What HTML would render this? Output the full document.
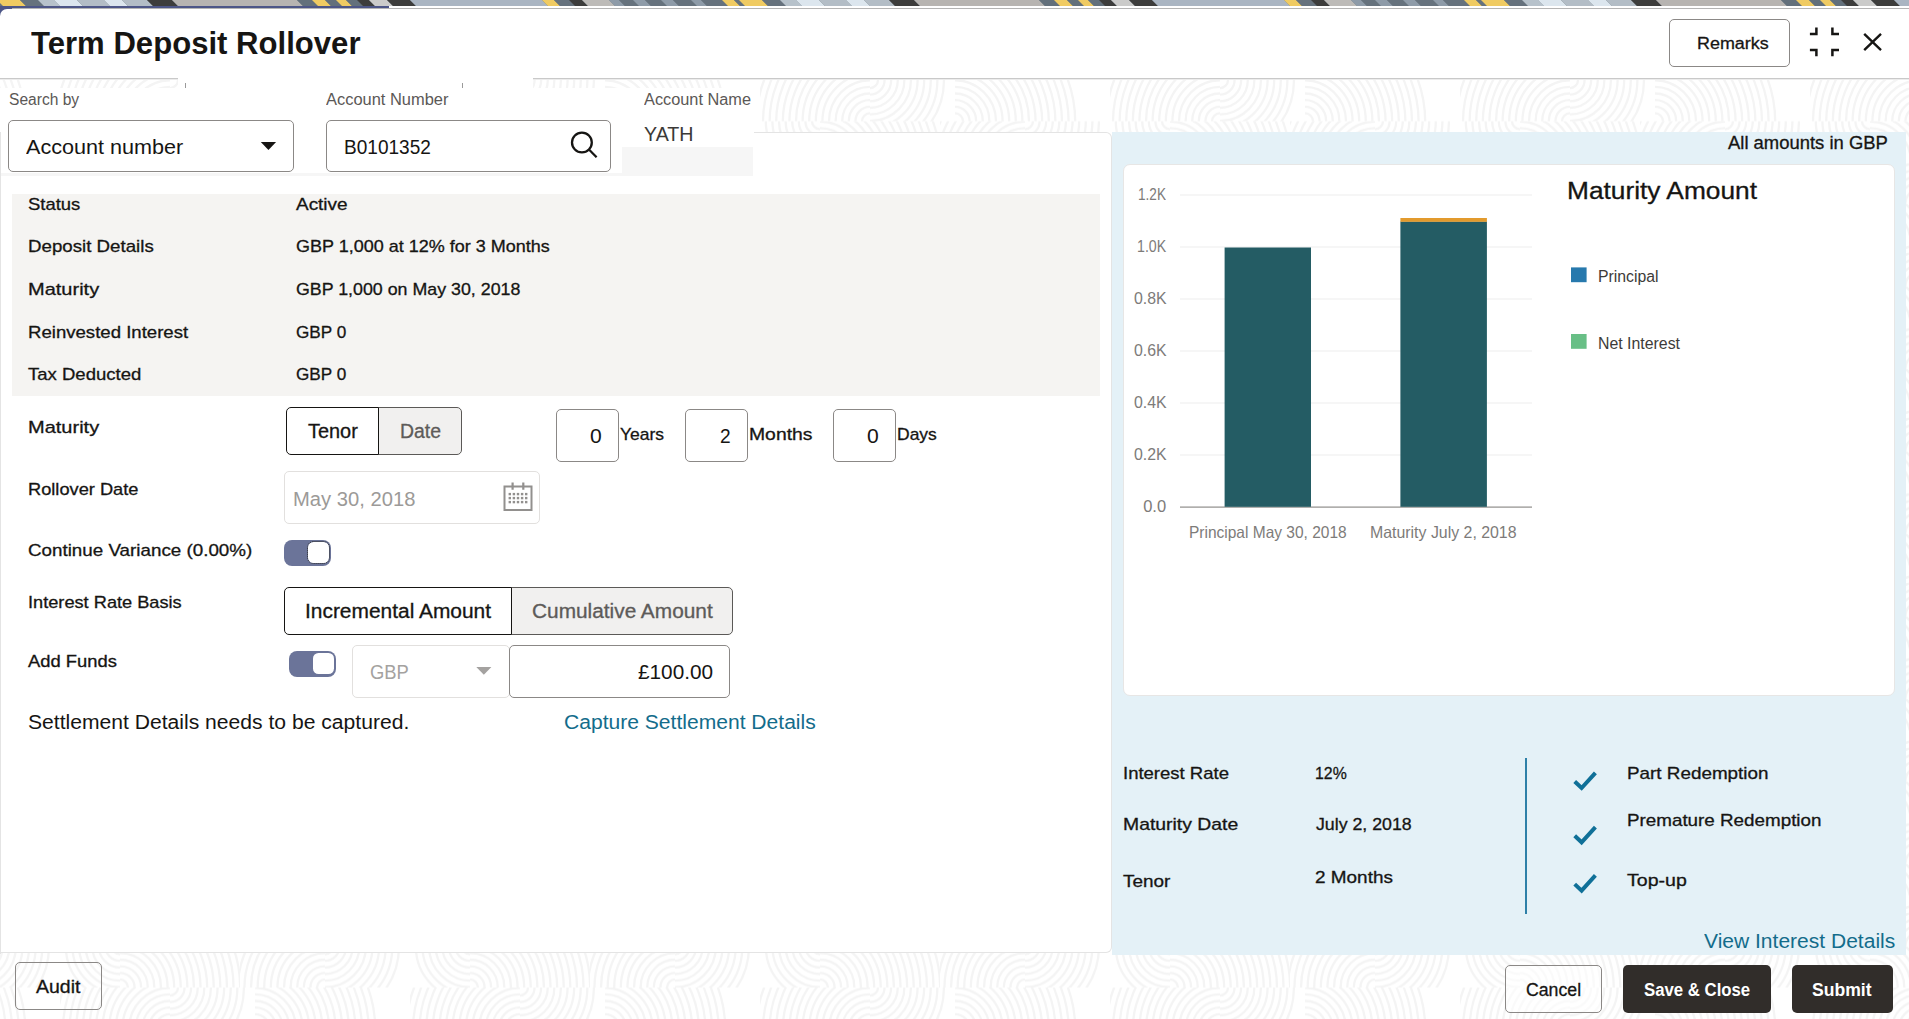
<!DOCTYPE html><html lang="en"><head><meta charset="utf-8"><title>Term Deposit Rollover</title><style>
html,body{margin:0;padding:0;}
body{width:1909px;height:1019px;overflow:hidden;background:#fff;position:relative;font-family:"Liberation Sans",sans-serif;}
.b{position:absolute;box-sizing:border-box;}
.t{position:absolute;white-space:nowrap;margin:0;transform-origin:0 50%;}
.strip{position:absolute;left:0;top:0;display:block;background:#66727d;}
.ov{position:absolute;left:0;top:0;pointer-events:none;}
.bgp{position:absolute;left:0;top:0;}
</style></head><body>
<svg class="bgp" width="1909" height="1019"><defs><pattern id="p" x="760" y="80" width="350" height="82.5" patternUnits="userSpaceOnUse"><defs><clipPath id="c0"><rect x="0" y="0.0" width="110" height="41.25"/></clipPath><clipPath id="c1"><rect x="110" y="0.0" width="85" height="41.25"/></clipPath><clipPath id="c2"><rect x="195" y="0.0" width="155" height="41.25"/></clipPath><clipPath id="c3"><rect x="0" y="41.25" width="60" height="41.25"/></clipPath><clipPath id="c4"><rect x="60" y="41.25" width="120" height="41.25"/></clipPath><clipPath id="c5"><rect x="180" y="41.25" width="85" height="41.25"/></clipPath><clipPath id="c6"><rect x="265" y="41.25" width="85" height="41.25"/></clipPath></defs><g clip-path="url(#c0)" fill="none" stroke="#f4f4f4" stroke-width="2.3"><circle cx="110" cy="41.25" r="8.0"/><circle cx="110" cy="41.25" r="14.6"/><circle cx="110" cy="41.25" r="21.2"/><circle cx="110" cy="41.25" r="27.8"/><circle cx="110" cy="41.25" r="34.4"/><circle cx="110" cy="41.25" r="41.0"/><circle cx="110" cy="41.25" r="47.6"/><circle cx="110" cy="41.25" r="54.2"/><circle cx="110" cy="41.25" r="60.8"/><circle cx="110" cy="41.25" r="67.4"/><circle cx="110" cy="41.25" r="74.0"/><circle cx="110" cy="41.25" r="80.6"/><circle cx="110" cy="41.25" r="87.2"/><circle cx="110" cy="41.25" r="93.8"/><circle cx="110" cy="41.25" r="100.4"/><circle cx="110" cy="41.25" r="107.0"/><circle cx="110" cy="41.25" r="113.6"/><circle cx="110" cy="41.25" r="120.2"/></g><g clip-path="url(#c1)" fill="none" stroke="#f4f4f4" stroke-width="2.3"><circle cx="110" cy="0.0" r="8.0"/><circle cx="110" cy="0.0" r="14.6"/><circle cx="110" cy="0.0" r="21.2"/><circle cx="110" cy="0.0" r="27.8"/><circle cx="110" cy="0.0" r="34.4"/><circle cx="110" cy="0.0" r="41.0"/><circle cx="110" cy="0.0" r="47.6"/><circle cx="110" cy="0.0" r="54.2"/><circle cx="110" cy="0.0" r="60.8"/><circle cx="110" cy="0.0" r="67.4"/><circle cx="110" cy="0.0" r="74.0"/></g><g clip-path="url(#c2)" fill="none" stroke="#f4f4f4" stroke-width="2.3"><circle cx="195" cy="41.25" r="8.0"/><circle cx="195" cy="41.25" r="14.6"/><circle cx="195" cy="41.25" r="21.2"/><circle cx="195" cy="41.25" r="27.8"/><circle cx="195" cy="41.25" r="34.4"/><circle cx="195" cy="41.25" r="41.0"/><circle cx="195" cy="41.25" r="47.6"/><circle cx="195" cy="41.25" r="54.2"/><circle cx="195" cy="41.25" r="60.8"/><circle cx="195" cy="41.25" r="67.4"/><circle cx="195" cy="41.25" r="74.0"/><circle cx="195" cy="41.25" r="80.6"/><circle cx="195" cy="41.25" r="87.2"/><circle cx="195" cy="41.25" r="93.8"/><circle cx="195" cy="41.25" r="100.4"/><circle cx="195" cy="41.25" r="107.0"/><circle cx="195" cy="41.25" r="113.6"/><circle cx="195" cy="41.25" r="120.2"/></g><g clip-path="url(#c3)" fill="none" stroke="#f4f4f4" stroke-width="2.3"><circle cx="60" cy="41.25" r="8.0"/><circle cx="60" cy="41.25" r="14.6"/><circle cx="60" cy="41.25" r="21.2"/><circle cx="60" cy="41.25" r="27.8"/><circle cx="60" cy="41.25" r="34.4"/><circle cx="60" cy="41.25" r="41.0"/><circle cx="60" cy="41.25" r="47.6"/><circle cx="60" cy="41.25" r="54.2"/></g><g clip-path="url(#c4)" fill="none" stroke="#f4f4f4" stroke-width="2.3"><circle cx="60" cy="82.5" r="8.0"/><circle cx="60" cy="82.5" r="14.6"/><circle cx="60" cy="82.5" r="21.2"/><circle cx="60" cy="82.5" r="27.8"/><circle cx="60" cy="82.5" r="34.4"/><circle cx="60" cy="82.5" r="41.0"/><circle cx="60" cy="82.5" r="47.6"/><circle cx="60" cy="82.5" r="54.2"/><circle cx="60" cy="82.5" r="60.8"/><circle cx="60" cy="82.5" r="67.4"/><circle cx="60" cy="82.5" r="74.0"/><circle cx="60" cy="82.5" r="80.6"/><circle cx="60" cy="82.5" r="87.2"/><circle cx="60" cy="82.5" r="93.8"/><circle cx="60" cy="82.5" r="100.4"/><circle cx="60" cy="82.5" r="107.0"/><circle cx="60" cy="82.5" r="113.6"/><circle cx="60" cy="82.5" r="120.2"/></g><g clip-path="url(#c5)" fill="none" stroke="#f4f4f4" stroke-width="2.3"><circle cx="265" cy="82.5" r="8.0"/><circle cx="265" cy="82.5" r="14.6"/><circle cx="265" cy="82.5" r="21.2"/><circle cx="265" cy="82.5" r="27.8"/><circle cx="265" cy="82.5" r="34.4"/><circle cx="265" cy="82.5" r="41.0"/><circle cx="265" cy="82.5" r="47.6"/><circle cx="265" cy="82.5" r="54.2"/><circle cx="265" cy="82.5" r="60.8"/><circle cx="265" cy="82.5" r="67.4"/><circle cx="265" cy="82.5" r="74.0"/><circle cx="265" cy="82.5" r="80.6"/><circle cx="265" cy="82.5" r="87.2"/><circle cx="265" cy="82.5" r="93.8"/><circle cx="265" cy="82.5" r="100.4"/><circle cx="265" cy="82.5" r="107.0"/><circle cx="265" cy="82.5" r="113.6"/><circle cx="265" cy="82.5" r="120.2"/></g><g clip-path="url(#c6)" fill="none" stroke="#f4f4f4" stroke-width="2.3"><circle cx="265" cy="41.25" r="8.0"/><circle cx="265" cy="41.25" r="14.6"/><circle cx="265" cy="41.25" r="21.2"/><circle cx="265" cy="41.25" r="27.8"/><circle cx="265" cy="41.25" r="34.4"/><circle cx="265" cy="41.25" r="41.0"/><circle cx="265" cy="41.25" r="47.6"/><circle cx="265" cy="41.25" r="54.2"/><circle cx="265" cy="41.25" r="60.8"/><circle cx="265" cy="41.25" r="67.4"/><circle cx="265" cy="41.25" r="74.0"/></g></pattern></defs><rect width="1909" height="1019" fill="url(#p)"/></svg>
<svg class="strip" width="1909" height="6" viewBox="0 0 1909 6" preserveAspectRatio="none"><polygon points="-3,0 20,0 26,6 3,6" fill="#f0cb62"/><polygon points="20,0 38,0 44,6 26,6" fill="#66727d"/><polygon points="38,0 54,0 60,6 44,6" fill="#b7c2cb"/><polygon points="54,0 77,0 83,6 60,6" fill="#dce6ee"/><polygon points="77,0 104,0 110,6 83,6" fill="#b3bdc6"/><polygon points="104,0 122,0 128,6 110,6" fill="#dce6ee"/><polygon points="122,0 147,0 153,6 128,6" fill="#b3bdc6"/><polygon points="147,0 172,0 178,6 153,6" fill="#3d3d3c"/><polygon points="172,0 297,0 303,6 178,6" fill="#b7b4b1"/><polygon points="297,0 312,0 318,6 303,6" fill="#63707b"/><polygon points="312,0 325,0 331,6 318,6" fill="#f0cb62"/><polygon points="325,0 336,0 342,6 331,6" fill="#63707b"/><polygon points="336,0 346,0 352,6 342,6" fill="#f0cb62"/><polygon points="346,0 357,0 363,6 352,6" fill="#63707b"/><polygon points="357,0 369,0 375,6 363,6" fill="#3d3d3c"/><polygon points="369,0 387,0 393,6 375,6" fill="#cbcbca"/><polygon points="387,0 410,0 416,6 393,6" fill="#3d3d3c"/><polygon points="410,0 542,0 548,6 416,6" fill="#aab5c2"/><polygon points="542,0 554,0 560,6 548,6" fill="#f0cb62"/><polygon points="554,0 569,0 575,6 560,6" fill="#66727d"/><polygon points="569,0 582,0 588,6 575,6" fill="#3d3d3c"/><polygon points="582,0 609,0 615,6 588,6" fill="#bdbbb8"/><polygon points="609,0 619,0 625,6 615,6" fill="#8e9ba8"/><polygon points="619,0 633,0 639,6 625,6" fill="#66727d"/><polygon points="633,0 645,0 651,6 639,6" fill="#8e9ba8"/><polygon points="645,0 661,0 667,6 651,6" fill="#66727d"/><polygon points="661,0 673,0 679,6 667,6" fill="#8e9ba8"/><polygon points="673,0 691,0 697,6 679,6" fill="#66727d"/><polygon points="691,0 701,0 707,6 697,6" fill="#8e9ba8"/><polygon points="701,0 722,0 728,6 707,6" fill="#66727d"/><polygon points="722,0 734,0 740,6 728,6" fill="#f0cb62"/><polygon points="734,0 739,0 745,6 740,6" fill="#66727d"/><polygon points="739,0 762,0 768,6 745,6" fill="#f0cb62"/><polygon points="762,0 780,0 786,6 768,6" fill="#66727d"/><polygon points="780,0 796,0 802,6 786,6" fill="#b7c2cb"/><polygon points="796,0 819,0 825,6 802,6" fill="#dce6ee"/><polygon points="819,0 846,0 852,6 825,6" fill="#b3bdc6"/><polygon points="846,0 864,0 870,6 852,6" fill="#dce6ee"/><polygon points="864,0 889,0 895,6 870,6" fill="#b3bdc6"/><polygon points="889,0 914,0 920,6 895,6" fill="#3d3d3c"/><polygon points="914,0 1039,0 1045,6 920,6" fill="#b7b4b1"/><polygon points="1039,0 1054,0 1060,6 1045,6" fill="#63707b"/><polygon points="1054,0 1067,0 1073,6 1060,6" fill="#f0cb62"/><polygon points="1067,0 1078,0 1084,6 1073,6" fill="#63707b"/><polygon points="1078,0 1088,0 1094,6 1084,6" fill="#f0cb62"/><polygon points="1088,0 1099,0 1105,6 1094,6" fill="#63707b"/><polygon points="1099,0 1111,0 1117,6 1105,6" fill="#3d3d3c"/><polygon points="1111,0 1129,0 1135,6 1117,6" fill="#cbcbca"/><polygon points="1129,0 1152,0 1158,6 1135,6" fill="#3d3d3c"/><polygon points="1152,0 1284,0 1290,6 1158,6" fill="#aab5c2"/><polygon points="1284,0 1296,0 1302,6 1290,6" fill="#f0cb62"/><polygon points="1296,0 1311,0 1317,6 1302,6" fill="#66727d"/><polygon points="1311,0 1324,0 1330,6 1317,6" fill="#3d3d3c"/><polygon points="1324,0 1351,0 1357,6 1330,6" fill="#bdbbb8"/><polygon points="1351,0 1361,0 1367,6 1357,6" fill="#8e9ba8"/><polygon points="1361,0 1375,0 1381,6 1367,6" fill="#66727d"/><polygon points="1375,0 1387,0 1393,6 1381,6" fill="#8e9ba8"/><polygon points="1387,0 1403,0 1409,6 1393,6" fill="#66727d"/><polygon points="1403,0 1415,0 1421,6 1409,6" fill="#8e9ba8"/><polygon points="1415,0 1433,0 1439,6 1421,6" fill="#66727d"/><polygon points="1433,0 1443,0 1449,6 1439,6" fill="#8e9ba8"/><polygon points="1443,0 1464,0 1470,6 1449,6" fill="#66727d"/><polygon points="1464,0 1476,0 1482,6 1470,6" fill="#f0cb62"/><polygon points="1476,0 1481,0 1487,6 1482,6" fill="#66727d"/><polygon points="1481,0 1504,0 1510,6 1487,6" fill="#f0cb62"/><polygon points="1504,0 1522,0 1528,6 1510,6" fill="#66727d"/><polygon points="1522,0 1538,0 1544,6 1528,6" fill="#b7c2cb"/><polygon points="1538,0 1561,0 1567,6 1544,6" fill="#dce6ee"/><polygon points="1561,0 1588,0 1594,6 1567,6" fill="#b3bdc6"/><polygon points="1588,0 1606,0 1612,6 1594,6" fill="#dce6ee"/><polygon points="1606,0 1631,0 1637,6 1612,6" fill="#b3bdc6"/><polygon points="1631,0 1656,0 1662,6 1637,6" fill="#3d3d3c"/><polygon points="1656,0 1781,0 1787,6 1662,6" fill="#b7b4b1"/><polygon points="1781,0 1796,0 1802,6 1787,6" fill="#63707b"/><polygon points="1796,0 1809,0 1815,6 1802,6" fill="#f0cb62"/><polygon points="1809,0 1820,0 1826,6 1815,6" fill="#63707b"/><polygon points="1820,0 1830,0 1836,6 1826,6" fill="#f0cb62"/><polygon points="1830,0 1841,0 1847,6 1836,6" fill="#63707b"/><polygon points="1841,0 1853,0 1859,6 1847,6" fill="#3d3d3c"/><polygon points="1853,0 1871,0 1877,6 1859,6" fill="#cbcbca"/><polygon points="1871,0 1894,0 1900,6 1877,6" fill="#3d3d3c"/><polygon points="1894,0 2026,0 2032,6 1900,6" fill="#aab5c2"/></svg>
<div class="b " style="left:0px;top:6px;width:389px;height:2px;background:#4d5687;"></div>
<div class="b " style="left:389px;top:6px;width:1520px;height:2px;background:#fff;"></div>
<div class="b " style="left:0px;top:8px;width:1909px;height:1px;background:#b4b4b4;"></div>
<div class="b " style="left:0px;top:8px;width:12px;height:12px;background:#4d5687;"></div>
<div class="b " style="left:0px;top:8.5px;width:1909px;height:69.5px;background:#fff;border-top-left-radius:7px;"></div>
<div class="b " style="left:0px;top:78px;width:1909px;height:1px;background:#c9c9c9;"></div>
<div class="b " style="left:0px;top:79px;width:1909px;height:1px;background:#ececec;"></div>
<div class="b " style="left:178px;top:76px;width:355px;height:12px;background:#fff;"></div>
<div class="b " style="left:0px;top:88px;width:753px;height:45px;background:#fff;"></div>
<div class="b " style="left:185px;top:83px;width:1px;height:5px;background:#9a9a9a;"></div>
<div class="b " style="left:462px;top:83px;width:1px;height:5px;background:#9a9a9a;"></div>
<div class="b " style="left:0px;top:132px;width:1111.5px;height:821px;background:#fff;border-radius:0 6px 6px 0;border:1px solid #e4e4e4;border-left:none;"></div>
<div class="b " style="left:0px;top:88px;width:754px;height:52px;background:#fff;"></div>
<div class="b " style="left:0px;top:132px;width:1px;height:822px;background:#e4e4e4;"></div>
<div class="b " style="left:1px;top:147px;width:752px;height:29px;background:#f6f6f6;"></div>
<div class="b " style="left:1px;top:120px;width:621px;height:53px;background:#fff;"></div>
<div class="b " style="left:12px;top:194px;width:1088px;height:201.5px;background:#f5f4f2;"></div>
<div class="b " style="left:1112px;top:132px;width:794px;height:822.6px;background:#e4f1f7;"></div>
<div class="b " style="left:1122.5px;top:163.8px;width:772.5px;height:531.8px;background:#fff;border-radius:7px;border:1px solid #e7e6e5;"></div>
<div class="b " style="left:8px;top:120px;width:286px;height:52px;background:#fff;border:1px solid #8b8886;border-radius:5px;box-sizing:border-box;"></div>
<div class="b " style="left:326px;top:120px;width:285px;height:52px;background:#fff;border:1px solid #8b8886;border-radius:5px;box-sizing:border-box;"></div>
<div class="b " style="left:378px;top:407px;width:84px;height:48px;background:#f1f0ef;border:1px solid #5b5957;border-radius:5px;box-sizing:border-box;border-radius:0 5px 5px 0;"></div>
<div class="b " style="left:286px;top:407px;width:93px;height:48px;background:#fff;border:1px solid #161513;border-radius:5px;box-sizing:border-box;border-radius:5px 0 0 5px;"></div>
<div class="b " style="left:556px;top:409px;width:63px;height:53px;background:#fff;border:1px solid #8b8886;border-radius:5px;box-sizing:border-box;"></div>
<div class="b " style="left:685px;top:409px;width:63px;height:53px;background:#fff;border:1px solid #8b8886;border-radius:5px;box-sizing:border-box;"></div>
<div class="b " style="left:833px;top:409px;width:63px;height:53px;background:#fff;border:1px solid #8b8886;border-radius:5px;box-sizing:border-box;"></div>
<div class="b " style="left:284px;top:471px;width:256px;height:53px;background:#fff;border:1px solid #e2e0de;border-radius:5px;box-sizing:border-box;"></div>
<div class="b " style="left:284px;top:539.7px;width:47px;height:26.09999999999991px;background:#6b7499;border-radius:8px;"></div>
<div class="b " style="left:307.7px;top:541.9000000000001px;width:21.5px;height:21.499999999999886px;background:#fff;border-radius:5.5px;outline:1px dotted #2e2e2e;outline-offset:0.5px;"></div>
<div class="b " style="left:289px;top:650.7px;width:47px;height:26.09999999999991px;background:#6b7499;border-radius:8px;"></div>
<div class="b " style="left:312.7px;top:652.9000000000001px;width:21.5px;height:21.499999999999886px;background:#fff;border-radius:5.5px;"></div>
<div class="b " style="left:511px;top:587px;width:222px;height:48px;background:#f1f0ef;border:1px solid #5b5957;border-radius:5px;box-sizing:border-box;border-radius:0 5px 5px 0;"></div>
<div class="b " style="left:284px;top:587px;width:228px;height:48px;background:#fff;border:1px solid #161513;border-radius:5px;box-sizing:border-box;border-radius:5px 0 0 5px;"></div>
<div class="b " style="left:352px;top:645px;width:157.5px;height:53px;background:#fff;border:1px solid #e2e0de;border-radius:5px;box-sizing:border-box;"></div>
<div class="b " style="left:509px;top:645px;width:221px;height:53px;background:#fff;border:1px solid #8b8886;border-radius:5px;box-sizing:border-box;"></div>
<div class="b " style="left:1669px;top:19px;width:121px;height:48px;background:#fff;border:1px solid #8b8886;border-radius:5px;box-sizing:border-box;"></div>
<div class="b " style="left:15px;top:962px;width:87px;height:48px;background:transparent;border:1px solid #8b8886;border-radius:5px;box-sizing:border-box;"></div>
<div class="b " style="left:1505px;top:965px;width:97px;height:48px;background:rgba(255,255,255,.55);border:1px solid #8b8886;border-radius:5px;box-sizing:border-box;"></div>
<div class="b " style="left:1623px;top:965px;width:148px;height:48px;background:#312d2a;border-radius:5px;"></div>
<div class="b " style="left:1792px;top:965px;width:101px;height:48px;background:#312d2a;border-radius:5px;"></div>
<div class="b " style="left:1525px;top:758px;width:2px;height:156px;background:#2e80a8;"></div>
<svg class="ov" width="1909" height="1019" viewBox="0 0 1909 1019"><rect x="1180" y="194.5" width="352" height="1" fill="#eeeeed"/><rect x="1180" y="246.5" width="352" height="1" fill="#eeeeed"/><rect x="1180" y="298.5" width="352" height="1" fill="#eeeeed"/><rect x="1180" y="350.5" width="352" height="1" fill="#eeeeed"/><rect x="1180" y="402.5" width="352" height="1" fill="#eeeeed"/><rect x="1180" y="454.5" width="352" height="1" fill="#eeeeed"/><rect x="1180" y="506.5" width="352" height="1.2" fill="#8f8d8b"/><rect x="1224.6" y="247.5" width="86.4" height="259.3" fill="#245c64"/><rect x="1400.4" y="221.5" width="86.5" height="285.3" fill="#245c64"/><rect x="1400.4" y="218" width="86.5" height="3.8" fill="#e29a2d"/><rect x="1571" y="267.4" width="15.6" height="14.8" fill="#2779ad"/><rect x="1571" y="334" width="15.6" height="14.8" fill="#68bf86"/><path d="M260.8 142 H276.1 L268.45 149.9 Z" fill="#161513"/><path d="M476.3 667 H491.4 L483.85 674.7 Z" fill="#a4a2a0"/><circle cx="581.9" cy="142.5" r="9.9" fill="none" stroke="#161513" stroke-width="2.3"/><path d="M589.2 149.8 L596.6 157.2" stroke="#161513" stroke-width="2.3" fill="none" stroke-linecap="butt"/><path d="M1809.9 33.9 H1816.4 V27.5 M1832.4 27.5 V33.9 H1839 M1809.9 50 H1816.4 V56.3 M1832.4 56.3 V50 H1839" stroke="#161513" stroke-width="2.5" fill="none"/><path d="M1864.2 33.9 L1881 50.1 M1881 33.9 L1864.2 50.1" stroke="#161513" stroke-width="2.4" fill="none"/><rect x="504.5" y="486.5" width="27" height="23.5" fill="none" stroke="#92908e" stroke-width="2"/><path d="M512.6 482.6 V489.8 M523.3 482.6 V489.8" stroke="#92908e" stroke-width="2.2" fill="none"/><rect x="508.6" y="492.9" width="2.4" height="2.4" fill="#92908e"/><rect x="512.7" y="492.9" width="2.4" height="2.4" fill="#92908e"/><rect x="516.8" y="492.9" width="2.4" height="2.4" fill="#92908e"/><rect x="520.9" y="492.9" width="2.4" height="2.4" fill="#92908e"/><rect x="525.0" y="492.9" width="2.4" height="2.4" fill="#92908e"/><rect x="508.6" y="496.9" width="2.4" height="2.4" fill="#92908e"/><rect x="512.7" y="496.9" width="2.4" height="2.4" fill="#92908e"/><rect x="516.8" y="496.9" width="2.4" height="2.4" fill="#92908e"/><rect x="520.9" y="496.9" width="2.4" height="2.4" fill="#92908e"/><rect x="525.0" y="496.9" width="2.4" height="2.4" fill="#92908e"/><rect x="508.6" y="500.9" width="2.4" height="2.4" fill="#92908e"/><rect x="512.7" y="500.9" width="2.4" height="2.4" fill="#92908e"/><rect x="516.8" y="500.9" width="2.4" height="2.4" fill="#92908e"/><rect x="520.9" y="500.9" width="2.4" height="2.4" fill="#92908e"/><rect x="525.0" y="500.9" width="2.4" height="2.4" fill="#92908e"/><path d="M1574.7 781.5 L1581.6 788.0 L1595.4 772.8" stroke="#0f7098" stroke-width="4" fill="none" stroke-linejoin="miter"/><path d="M1574.7 835.8 L1581.6 842.3 L1595.4 827.1" stroke="#0f7098" stroke-width="4" fill="none" stroke-linejoin="miter"/><path d="M1574.7 884.1 L1581.6 890.6 L1595.4 875.4" stroke="#0f7098" stroke-width="4" fill="none" stroke-linejoin="miter"/></svg>
<div class="t" style="left:30.90px;top:24px;font-size:31px;line-height:40px;color:#161513;transform:scaleX(1.0033);font-weight:700;">Term Deposit Rollover</div>
<div class="t" style="left:1697.30px;top:32px;font-size:17.3px;line-height:22px;color:#161513;transform:scaleX(1.0376);-webkit-text-stroke:0.3px #161513;">Remarks</div>
<div class="t" style="left:8.70px;top:89px;font-size:15.8px;line-height:21px;color:#5b5856;transform:scaleX(0.9859);">Search by</div>
<div class="t" style="left:326.30px;top:89px;font-size:15.8px;line-height:21px;color:#5b5856;transform:scaleX(1.0408);">Account Number</div>
<div class="t" style="left:643.50px;top:89px;font-size:15.8px;line-height:21px;color:#5b5856;transform:scaleX(1.0328);">Account Name</div>
<div class="t" style="left:25.50px;top:135px;font-size:19.5px;line-height:25px;color:#161513;transform:scaleX(1.1070);">Account number</div>
<div class="t" style="left:343.50px;top:135px;font-size:19.5px;line-height:25px;color:#161513;transform:scaleX(0.9764);">B0101352</div>
<div class="t" style="left:644.00px;top:122px;font-size:19.5px;line-height:25px;color:#3b3937;transform:scaleX(1.0081);">YATH</div>
<div class="t" style="left:27.50px;top:194px;font-size:17px;line-height:22px;color:#161513;transform:scaleX(1.0851);-webkit-text-stroke:0.3px #161513;">Status</div>
<div class="t" style="left:296.00px;top:194px;font-size:17px;line-height:22px;color:#161513;transform:scaleX(1.1145);-webkit-text-stroke:0.3px #161513;">Active</div>
<div class="t" style="left:27.50px;top:236px;font-size:17px;line-height:22px;color:#161513;transform:scaleX(1.0997);-webkit-text-stroke:0.3px #161513;">Deposit Details</div>
<div class="t" style="left:296.00px;top:236px;font-size:17px;line-height:22px;color:#161513;transform:scaleX(1.0588);-webkit-text-stroke:0.3px #161513;">GBP 1,000 at 12% for 3 Months</div>
<div class="t" style="left:27.50px;top:279px;font-size:17px;line-height:22px;color:#161513;transform:scaleX(1.1769);-webkit-text-stroke:0.3px #161513;">Maturity</div>
<div class="t" style="left:296.00px;top:279px;font-size:17px;line-height:22px;color:#161513;transform:scaleX(1.0472);-webkit-text-stroke:0.3px #161513;">GBP 1,000 on May 30, 2018</div>
<div class="t" style="left:27.50px;top:322px;font-size:17px;line-height:22px;color:#161513;transform:scaleX(1.0935);-webkit-text-stroke:0.3px #161513;">Reinvested Interest</div>
<div class="t" style="left:296.00px;top:322px;font-size:17px;line-height:22px;color:#161513;transform:scaleX(1.0100);-webkit-text-stroke:0.3px #161513;">GBP 0</div>
<div class="t" style="left:27.50px;top:364px;font-size:17px;line-height:22px;color:#161513;transform:scaleX(1.0894);-webkit-text-stroke:0.3px #161513;">Tax Deducted</div>
<div class="t" style="left:296.00px;top:364px;font-size:17px;line-height:22px;color:#161513;transform:scaleX(1.0100);-webkit-text-stroke:0.3px #161513;">GBP 0</div>
<div class="t" style="left:27.70px;top:417px;font-size:17px;line-height:22px;color:#161513;transform:scaleX(1.1769);-webkit-text-stroke:0.3px #161513;">Maturity</div>
<div class="t" style="left:27.70px;top:479px;font-size:17px;line-height:22px;color:#161513;transform:scaleX(1.0718);-webkit-text-stroke:0.3px #161513;">Rollover Date</div>
<div class="t" style="left:27.70px;top:540px;font-size:17px;line-height:22px;color:#161513;transform:scaleX(1.1055);-webkit-text-stroke:0.3px #161513;">Continue Variance (0.00%)</div>
<div class="t" style="left:27.70px;top:592px;font-size:17px;line-height:22px;color:#161513;transform:scaleX(1.0703);-webkit-text-stroke:0.3px #161513;">Interest Rate Basis</div>
<div class="t" style="left:27.70px;top:651px;font-size:17px;line-height:22px;color:#161513;transform:scaleX(1.0815);-webkit-text-stroke:0.3px #161513;">Add Funds</div>
<div class="t" style="left:308.20px;top:419px;font-size:19.5px;line-height:25px;color:#161513;transform:scaleX(1.0205);-webkit-text-stroke:0.3px #161513;">Tenor</div>
<div class="t" style="left:399.60px;top:419px;font-size:19.5px;line-height:25px;color:#5d5b59;transform:scaleX(0.9951);-webkit-text-stroke:0.3px #5d5b59;">Date</div>
<div class="t" style="left:589.50px;top:424px;font-size:19.5px;line-height:25px;color:#161513;transform:scaleX(1.0833);">0</div>
<div class="t" style="left:720.00px;top:424px;font-size:19.5px;line-height:25px;color:#161513;transform:scaleX(0.9815);">2</div>
<div class="t" style="left:867.30px;top:424px;font-size:19.5px;line-height:25px;color:#161513;transform:scaleX(1.0833);">0</div>
<div class="t" style="left:619.60px;top:424px;font-size:17px;line-height:22px;color:#161513;transform:scaleX(1.0280);-webkit-text-stroke:0.3px #161513;">Years</div>
<div class="t" style="left:748.60px;top:424px;font-size:17px;line-height:22px;color:#161513;transform:scaleX(1.1382);-webkit-text-stroke:0.3px #161513;">Months</div>
<div class="t" style="left:896.90px;top:424px;font-size:17px;line-height:22px;color:#161513;transform:scaleX(1.0284);-webkit-text-stroke:0.3px #161513;">Days</div>
<div class="t" style="left:293.10px;top:487px;font-size:19.5px;line-height:25px;color:#9c9a98;transform:scaleX(1.0355);">May 30, 2018</div>
<div class="t" style="left:304.80px;top:599px;font-size:19.5px;line-height:25px;color:#161513;transform:scaleX(1.0727);-webkit-text-stroke:0.3px #161513;">Incremental Amount</div>
<div class="t" style="left:531.90px;top:599px;font-size:19.5px;line-height:25px;color:#5d5b59;transform:scaleX(1.0686);-webkit-text-stroke:0.3px #5d5b59;">Cumulative Amount</div>
<div class="t" style="left:369.50px;top:660px;font-size:19.5px;line-height:25px;color:#a4a2a0;transform:scaleX(0.9417);">GBP</div>
<div class="t" style="left:637.50px;top:660px;font-size:19.5px;line-height:25px;color:#161513;transform:scaleX(1.0652);">£100.00</div>
<div class="t" style="left:27.60px;top:710px;font-size:19.5px;line-height:25px;color:#161513;transform:scaleX(1.0823);">Settlement Details needs to be captured.</div>
<div class="t" style="left:564.40px;top:710px;font-size:19.5px;line-height:25px;color:#136c8b;transform:scaleX(1.0803);">Capture Settlement Details</div>
<div class="t" style="left:36.10px;top:976px;font-size:17.5px;line-height:23px;color:#161513;transform:scaleX(1.1128);-webkit-text-stroke:0.3px #161513;">Audit</div>
<div class="t" style="left:1728.20px;top:132px;font-size:17.5px;line-height:23px;color:#161513;transform:scaleX(1.0534);-webkit-text-stroke:0.3px #161513;">All amounts in GBP</div>
<div class="t" style="left:1567.40px;top:176px;font-size:23.5px;line-height:31px;color:#161513;transform:scaleX(1.1190);-webkit-text-stroke:0.3px #161513;">Maturity Amount</div>
<div class="t" style="left:1138.20px;top:184px;font-size:16.5px;line-height:21px;color:#7d7b79;transform:scaleX(0.8230);">1.2K</div>
<div class="t" style="left:1137.00px;top:236px;font-size:16.5px;line-height:21px;color:#7d7b79;transform:scaleX(0.8584);">1.0K</div>
<div class="t" style="left:1133.50px;top:288px;font-size:16.5px;line-height:21px;color:#7d7b79;transform:scaleX(0.9617);">0.8K</div>
<div class="t" style="left:1133.50px;top:340px;font-size:16.5px;line-height:21px;color:#7d7b79;transform:scaleX(0.9617);">0.6K</div>
<div class="t" style="left:1133.50px;top:392px;font-size:16.5px;line-height:21px;color:#7d7b79;transform:scaleX(0.9617);">0.4K</div>
<div class="t" style="left:1133.50px;top:444px;font-size:16.5px;line-height:21px;color:#7d7b79;transform:scaleX(0.9617);">0.2K</div>
<div class="t" style="left:1143.20px;top:496px;font-size:16.5px;line-height:21px;color:#7d7b79;">0.0</div>
<div class="t" style="left:1189.20px;top:522px;font-size:16.5px;line-height:21px;color:#7d7b79;transform:scaleX(0.9392);">Principal May 30, 2018</div>
<div class="t" style="left:1370.05px;top:522px;font-size:16.5px;line-height:21px;color:#7d7b79;transform:scaleX(0.9625);">Maturity July 2, 2018</div>
<div class="t" style="left:1597.60px;top:266px;font-size:16px;line-height:21px;color:#3d3b39;transform:scaleX(0.9870);">Principal</div>
<div class="t" style="left:1597.60px;top:333px;font-size:16px;line-height:21px;color:#3d3b39;transform:scaleX(0.9915);">Net Interest</div>
<div class="t" style="left:1122.50px;top:763px;font-size:17px;line-height:22px;color:#161513;transform:scaleX(1.0884);-webkit-text-stroke:0.3px #161513;">Interest Rate</div>
<div class="t" style="left:1315.30px;top:763px;font-size:17px;line-height:22px;color:#161513;transform:scaleX(0.9324);-webkit-text-stroke:0.3px #161513;">12%</div>
<div class="t" style="left:1122.50px;top:814px;font-size:17px;line-height:22px;color:#161513;transform:scaleX(1.1395);-webkit-text-stroke:0.3px #161513;">Maturity Date</div>
<div class="t" style="left:1315.70px;top:814px;font-size:17px;line-height:22px;color:#161513;transform:scaleX(1.0436);-webkit-text-stroke:0.3px #161513;">July 2, 2018</div>
<div class="t" style="left:1122.50px;top:871px;font-size:17px;line-height:22px;color:#161513;transform:scaleX(1.1153);-webkit-text-stroke:0.3px #161513;">Tenor</div>
<div class="t" style="left:1315.30px;top:867px;font-size:17px;line-height:22px;color:#161513;transform:scaleX(1.1144);-webkit-text-stroke:0.3px #161513;">2 Months</div>
<div class="t" style="left:1627.10px;top:763px;font-size:17px;line-height:22px;color:#161513;transform:scaleX(1.1089);-webkit-text-stroke:0.3px #161513;">Part Redemption</div>
<div class="t" style="left:1627.10px;top:810px;font-size:17px;line-height:22px;color:#161513;transform:scaleX(1.1064);-webkit-text-stroke:0.3px #161513;">Premature Redemption</div>
<div class="t" style="left:1627.10px;top:870px;font-size:17px;line-height:22px;color:#161513;transform:scaleX(1.1500);-webkit-text-stroke:0.3px #161513;">Top-up</div>
<div class="t" style="left:1703.80px;top:928px;font-size:20px;line-height:26px;color:#136c8b;transform:scaleX(1.0511);">View Interest Details</div>
<div class="t" style="left:1526.00px;top:979px;font-size:17.5px;line-height:23px;color:#161513;transform:scaleX(1.0110);-webkit-text-stroke:0.3px #161513;">Cancel</div>
<div class="t" style="left:1643.60px;top:979px;font-size:17.5px;line-height:23px;color:#fff;transform:scaleX(0.9576);font-weight:700;">Save &amp; Close</div>
<div class="t" style="left:1812.10px;top:979px;font-size:17.5px;line-height:23px;color:#fff;transform:scaleX(1.0051);font-weight:700;">Submit</div>
</body></html>
